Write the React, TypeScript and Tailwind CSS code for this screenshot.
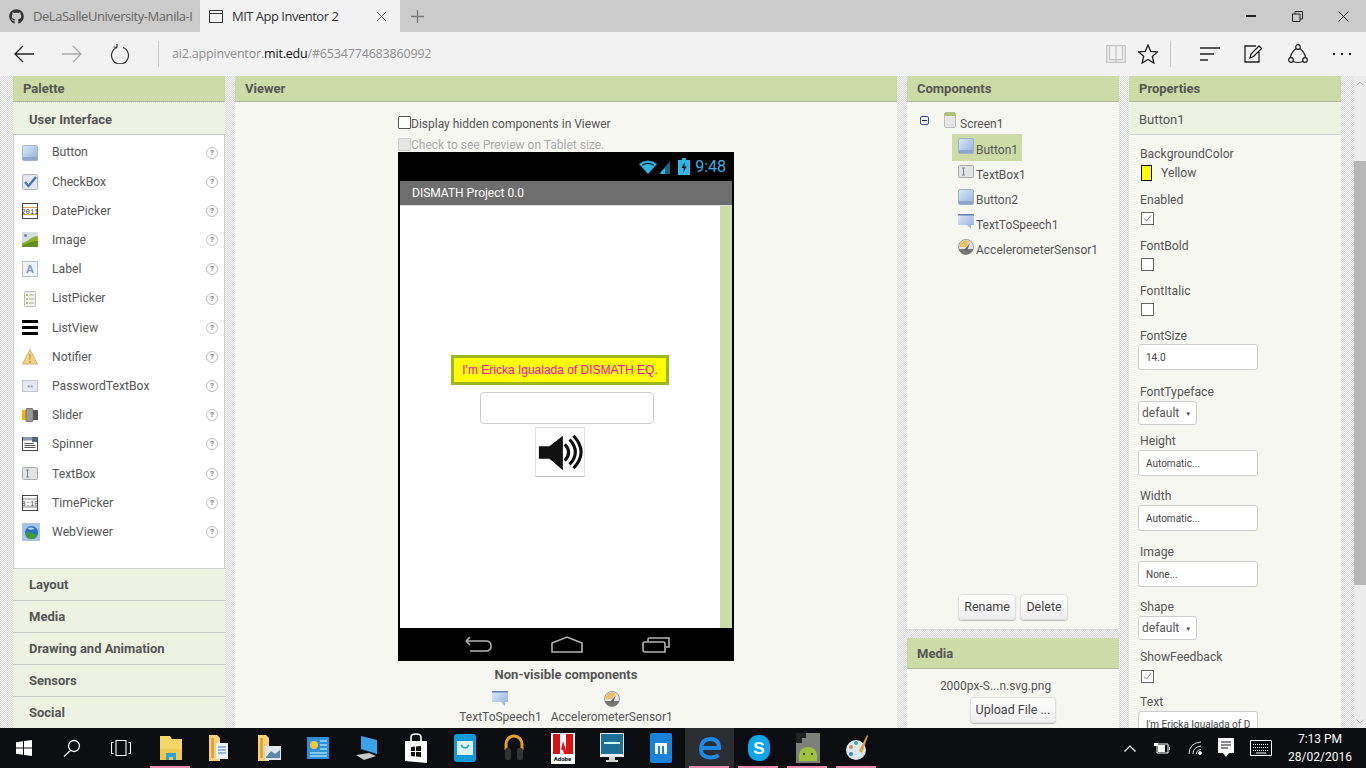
// App.tsx
import type { ReactNode } from "react";
import { FaGithub } from "react-icons/fa";

const paletteItems = [
  "Button",
  "CheckBox",
  "DatePicker",
  "Image",
  "Label",
  "ListPicker",
  "ListView",
  "Notifier",
  "PasswordTextBox",
  "Slider",
  "Spinner",
  "TextBox",
  "TimePicker",
  "WebViewer",
];

const drawers = ["Layout", "Media", "Drawing and Animation", "Sensors", "Social"];

/* ---------------- component icons ---------------- */

function Ico({ children, className = "w-4 h-4" }: { children: ReactNode; className?: string }) {
  return (
    <svg viewBox="0 0 16 16" className={["shrink-0", className].join(" ")} aria-hidden="true">
      {children}
    </svg>
  );
}

function ButtonIcon() {
  return (
    <Ico>
      <rect x="0.5" y="0.5" width="15" height="15" rx="1.5" fill="url(#blueBtn)" stroke="#9fb3cf" />
      <rect x="1" y="12" width="14" height="3" fill="#8ea6cc" />
    </Ico>
  );
}

function TextBoxIcon() {
  return (
    <Ico>
      <rect x="0.5" y="1.5" width="15" height="12" rx="1" fill="#e4e4e4" stroke="#a9a9a9" />
      <path d="M4 4h3M4 11h3M5.500 4v7" stroke="#6f7fa0" fill="none" />
    </Ico>
  );
}

function SpeechIcon() {
  return (
    <Ico>
      <path d="M0 0h16v11h-3v4l-4-4H0z" fill="url(#blueBtn)" />
      <path d="M0 0h16v1.500H0z" fill="#5f82b8" />
    </Ico>
  );
}

function SensorIcon() {
  return (
    <Ico>
      <circle cx="8" cy="8" r="7.500" fill="#e6e6e6" stroke="#9a9a9a" />
      <path d="M1.500 8a6.500 6.500 0 0 1 10-5.400L8 8z" fill="#f0c060" />
      <path d="M0.800 10h14.400A7.500 7.500 0 0 1 .8 10z" fill="#777" />
      <path d="M6 11l6-7-3 8z" fill="#666" />
    </Ico>
  );
}

function PaletteIcon({ name }: { name: string }) {
  switch (name) {
    case "Button":
      return <ButtonIcon />;
    case "CheckBox":
      return (
        <Ico>
          <rect x="0.5" y="0.5" width="15" height="15" rx="1" fill="#e3e6ec" stroke="#b0b4bc" />
          <path d="M3 8l3.500 4L14 3" fill="none" stroke="#4a74c0" strokeWidth="2.400" />
        </Ico>
      );
    case "DatePicker":
      return (
        <Ico>
          <rect x="0.5" y="0.5" width="15" height="15" fill="#fff" stroke="#444" />
          <path d="M1 4.500h14M1 11.500h14" stroke="#e0a050" />
          <text x="8" y="10.800" fontSize="7" textAnchor="middle" fontFamily="Liberation Mono, monospace" fill="#333">
            2011
          </text>
        </Ico>
      );
    case "Image":
      return (
        <Ico>
          <rect x="0" y="0" width="16" height="15" fill="#d5dde5" />
          <circle cx="3.500" cy="3.500" r="1.600" fill="#888" />
          <path d="M0 11Q6 9 8 7t8-3v11H0z" fill="#8fb02e" />
          <path d="M0 14q8-5 16-5v6H0z" fill="#5f8f1e" />
        </Ico>
      );
    case "Label":
      return (
        <Ico>
          <rect x="0.5" y="0.5" width="15" height="15" fill="#f0f3f8" stroke="#b8c0cc" />
          <text x="8" y="12" fontSize="11" fontWeight="700" textAnchor="middle" fontFamily="Liberation Sans, sans-serif" fill="#7d98c8">
            A
          </text>
        </Ico>
      );
    case "ListPicker":
      return (
        <Ico>
          <rect x="2.500" y="0.5" width="11" height="15" rx="1" fill="#f4f4ea" stroke="#bbb" />
          <path d="M4 4h2M4 8h2M4 12h2" stroke="#9ab04a" strokeWidth="1.400" />
          <path d="M7 4h5M7 8h5M7 12h5" stroke="#aaa" />
        </Ico>
      );
    case "ListView":
      return (
        <Ico>
          <path d="M0 0h16v3H0zM0 6h16v3H0zM0 12h16v3H0z" fill="#000" />
        </Ico>
      );
    case "Notifier":
      return (
        <Ico>
          <path d="M8 .5L15.500 15H.5z" fill="#f2d48a" stroke="#c9b27a" />
          <path d="M7.300 5h1.400l-.2 6h-1zM7.200 12h1.600v1.600H7.200z" fill="#d09030" />
        </Ico>
      );
    case "PasswordTextBox":
      return (
        <Ico>
          <rect x="0.5" y="2.500" width="15" height="11" fill="#e6e9f2" stroke="#c0c4cc" />
          <text x="8" y="12" fontSize="8" textAnchor="middle" fontFamily="Liberation Sans, sans-serif" fill="#6f86b8">
            **
          </text>
        </Ico>
      );
    case "Slider":
      return (
        <Ico>
          <rect x="0" y="3" width="5" height="10" fill="#f2b400" />
          <rect x="10" y="3" width="6" height="10" fill="#555" />
          <rect x="4" y="1.500" width="7" height="13" rx="1" fill="#999" stroke="#777" />
        </Ico>
      );
    case "Spinner":
      return (
        <Ico>
          <rect x="0.5" y="1.500" width="15" height="13" fill="#fff" stroke="#444" />
          <rect x="1" y="1" width="14" height="3.500" fill="#8a9ab0" />
          <rect x="10" y="1" width="5.500" height="5" fill="#567" />
          <path d="M2.500 7.500h9M2.500 9.500h11M2.500 11.500h11" stroke="#555" />
        </Ico>
      );
    case "TextBox":
      return <TextBoxIcon />;
    case "TimePicker":
      return (
        <Ico>
          <rect x="0.5" y="0.5" width="15" height="15" fill="#fff" stroke="#444" />
          <path d="M1 4h14M1 12h14" stroke="#888" />
          <text x="8" y="10.500" fontSize="7" textAnchor="middle" fontFamily="Liberation Mono, monospace" fill="#333">
            8:10
          </text>
        </Ico>
      );
    default:
      return (
        <Ico className="h-[18px] w-[18px]">
          <rect x="0" y="0" width="16" height="16" fill="#a8c4e8" />
          <circle cx="8.500" cy="8.500" r="5.800" fill="#2f6fc0" />
          <path d="M3 9q3-2 6 0t5 0q-1 5-5.500 5.300T3 9z" fill="#3f9a3a" />
          <path d="M5 5q3-2 6 0-3 2-6 0z" fill="#bcd8f2" />
        </Ico>
      );
  }
}

function HelpDot() {
  return (
    <span className="flex h-[12px] w-[12px] items-center justify-center rounded-full border border-[#bdbdbd] bg-white text-[8px] font-bold leading-none text-[#777]">
      ?
    </span>
  );
}

/* ---------------- panels ---------------- */

function PanelHeader({ title }: { title: string }) {
  return (
    <div className="flex h-[26px] shrink-0 items-center border-b border-[#b3b9a4] bg-[#cddba6] pl-[10px] text-[13px] font-bold text-[#555]">
      {title}
    </div>
  );
}

function Palette() {
  return (
    <div className="flex w-[212px] shrink-0 flex-col">
      <PanelHeader title="Palette" />
      <div className="mt-[1px] flex h-[32px] shrink-0 items-center border-b border-[#c4c4c4] bg-[#eef2e0] pl-[16px] pt-[3px] text-[13px] font-bold text-[#555]">
        User Interface
      </div>
      <div className="h-[434px] shrink-0 border-x border-b border-[#cfcfcf] bg-white pt-[3px]">
        {paletteItems.map((name) => (
          <div key={name} className="flex h-[29.2px] items-center pl-[8px] pr-[6px] text-[12.2px] text-[#555]">
            <span className="flex w-[30px] items-center">
              <PaletteIcon name={name} />
            </span>
            <span>{name}</span>
            <span className="ml-auto">
              <HelpDot />
            </span>
          </div>
        ))}
      </div>
      {drawers.map((d) => (
        <div
          key={d}
          className="flex h-[32px] shrink-0 items-center border-b border-[#c9c9c9] bg-[#eef2e0] pl-[16px] text-[13px] font-bold text-[#555]"
        >
          {d}
        </div>
      ))}
    </div>
  );
}

function SpeakerImage() {
  return (
    <svg viewBox="0 0 50 50" className="h-full w-full" aria-hidden="true">
      <path d="M3 19h11L28 8v36L14 32H3z" fill="#111" />
      <g fill="none" stroke="#111" strokeWidth="3.200">
        <path d="M30 17q8 8.500 0 17" />
        <path d="M35 12q12 13 0 26" />
        <path d="M39 8q16 17 0 34" />
      </g>
    </svg>
  );
}

function Phone() {
  return (
    <div className="flex h-[509px] w-[336px] shrink-0 flex-col bg-black px-[2px]">
      <div className="flex h-[29px] shrink-0 items-center justify-end pr-[6px]">
        <svg viewBox="0 0 32 14" className="mr-[7px] h-[14px] w-[32px]" aria-hidden="true">
          <path d="M0 4Q9-3 18 4L9 14z" fill="#33b5e5" />
          <path d="M3 5.500Q9 1 15 5.500" fill="none" stroke="#000" />
          <path d="M20 14L31 1v13z" fill="#33b5e5" opacity="0.55" />
          <path d="M22 14h4V8l-4 4z" fill="#33b5e5" />
        </svg>
        <svg viewBox="0 0 12 17" className="mr-[5px] h-[17px] w-[12px]" aria-hidden="true">
          <path d="M4 0h4v2h4v15H0V2h4z" fill="#33b5e5" />
          <path d="M7 4L3.500 10H6l-1 5 3.500-6.500H6z" fill="#000" />
        </svg>
        <span className="text-[16px] leading-none text-[#33b5e5]">9:48</span>
      </div>
      <div className="flex h-[24px] shrink-0 items-center bg-[#6e6e6e] pl-[12px] text-[12px] text-white">
        DISMATH Project 0.0
      </div>
      <div className="flex h-[423px] shrink-0 border-t border-[#ddd] bg-white">
        <div className="flex flex-1 flex-col items-center pt-[149px]">
          <div className="flex h-[30px] w-[218px] items-center justify-center border-[3px] border-[#9cb81f] bg-[#ffff00] font-['Liberation_Sans'] text-[12px] text-[#ff00c8]">
            I'm Ericka Igualada of DISMATH EQ.
          </div>
          <div className="ml-[14px] mt-[7px] h-[32px] w-[174px] rounded-[4px] border border-[#ccc] bg-white" />
          <div className="mt-[3px] h-[50px] w-[50px] border border-[#e2e2e2] border-b-[#bbb] bg-white">
            <SpeakerImage />
          </div>
        </div>
        <div className="w-[12px] bg-[#cddba6]" />
      </div>
      <div className="relative flex h-[33px] shrink-0 items-center">
        <svg viewBox="0 0 332 33" className="h-[33px] w-[332px]" fill="none" stroke="#b5b5b5" strokeWidth="1.600" aria-hidden="true">
          <path d="M66 13h20q5 0 5 5t-5 5H70M66 13l4-4M66 13l4 4" />
          <path d="M152 24v-9l15-6 15 6v9z" />
          <path d="M243 16q0-2 2-2h19q1 0 1 2v8h-20q-2 0-2-2zM248 13v-2q0-1 2-1h19v9h-3" />
        </svg>
      </div>
    </div>
  );
}

function Viewer() {
  return (
    <div className="flex w-[662px] shrink-0 flex-col">
      <PanelHeader title="Viewer" />
      <div className="flex flex-1 flex-col bg-[#f7f7f2] pl-[163px] pt-[13px]">
        <div className="flex h-[14px] shrink-0 items-center text-[12px] text-[#555]">
          <span className="h-[13px] w-[13px] shrink-0 rounded-[1px] border border-[#555] bg-white" />
          <span className="mt-[3px]">Display hidden components in Viewer</span>
        </div>
        <div className="mt-[8px] flex h-[14px] shrink-0 items-center text-[12px] text-[#aaa]">
          <span className="h-[13px] w-[13px] shrink-0 rounded-[1px] border border-[#ccc] bg-[#e6e6e6]" />
          <span className="mt-[2px]">Check to see Preview on Tablet size.</span>
        </div>
        <div className="mt-[1px] flex w-[336px] flex-col items-center">
          <Phone />
          <div className="mt-[6px] h-[16px] shrink-0 text-[13px] font-bold leading-4 text-[#555]">Non-visible components</div>
          <div className="mt-[8px] flex gap-[9px] text-[12px] leading-[15px] text-[#555]">
            <div className="flex flex-col items-center">
              <SpeechIcon />
              <span className="mt-[3px]">TextToSpeech1</span>
            </div>
            <div className="flex flex-col items-center">
              <SensorIcon />
              <span className="mt-[3px]">AccelerometerSensor1</span>
            </div>
          </div>
        </div>
      </div>
    </div>
  );
}

function TreeRow({ icon, label }: { icon: ReactNode; label: string }) {
  return (
    <div className="flex h-[25px] shrink-0 pl-[51px]">
      <div className="pt-[3px]">{icon}</div>
      <span className="ml-[2px] pt-[6px] text-[12px] leading-4">{label}</span>
    </div>
  );
}

function GrayButton({ className, children }: { className: string; children: ReactNode }) {
  return (
    <div
      className={[
        "flex items-center justify-center rounded-[4px] border border-[#dedede] bg-[linear-gradient(#ffffff,#eeeeee)] text-[12.5px] text-[#444] shadow-[0_1px_1px_rgba(0,0,0,0.25)]",
        className,
      ].join(" ")}
    >
      {children}
    </div>
  );
}

function Components() {
  return (
    <div className="flex w-[212px] shrink-0 flex-col">
      <PanelHeader title="Components" />
      <div className="flex h-[528px] shrink-0 flex-col border-b border-[#dcdcdc] bg-[#f7f7f2] pt-[9px] text-[#555]">
        <div className="flex h-[23px] shrink-0 pl-[13px]">
          <span className="mt-[5px] flex h-[9px] w-[9px] items-center justify-center rounded-[2px] border border-[#3b4a94] bg-[#eef]">
            <span className="h-px w-[5px] bg-[#223]" />
          </span>
          <svg viewBox="0 0 12 16" className="ml-[15px] mt-[1px] h-[16px] w-[12px]" aria-hidden="true">
            <rect x="0.5" y="0.5" width="11" height="15" rx="1.500" fill="#e6e6e6" stroke="#bbb" />
            <path d="M.5 4V2q0-1.500 1.500-1.500h8Q11.500.5 11.500 2v2z" fill="#a9c46c" />
          </svg>
          <span className="ml-[4px] pt-[5px] text-[12px] leading-4">Screen1</span>
        </div>
        <div className="ml-[45px] flex h-[27px] w-[70px] shrink-0 bg-[#cddba6] pl-[6px]">
          <div className="pt-[4px]">
            <ButtonIcon />
          </div>
          <span className="ml-[2px] pt-[8px] text-[12px] leading-4">Button1</span>
        </div>
        <TreeRow icon={<TextBoxIcon />} label="TextBox1" />
        <TreeRow icon={<ButtonIcon />} label="Button2" />
        <TreeRow icon={<SpeechIcon />} label="TextToSpeech1" />
        <TreeRow icon={<SensorIcon />} label="AccelerometerSensor1" />
        <div className="mb-[9px] mt-auto flex justify-center gap-[4px]">
          <GrayButton className="h-[26px] w-[58px]">Rename</GrayButton>
          <GrayButton className="h-[26px] w-[48px]">Delete</GrayButton>
        </div>
      </div>
      <div className="mt-[8px] flex h-[31px] shrink-0 items-center border-b border-[#b3b9a4] bg-[#cddba6] pl-[10px] pt-[2px] text-[13px] font-bold text-[#555]">
        Media
      </div>
      <div className="flex flex-1 flex-col items-center overflow-hidden bg-[#f7f7f2] pt-[9px]">
        <span className="mr-[35px] text-[12px] leading-4 text-[#555]">2000px-S...n.svg.png</span>
        <GrayButton className="mt-[3px] h-[26px] w-[86px] shrink-0">Upload File ...</GrayButton>
      </div>
    </div>
  );
}

function FieldLabel({ className = "", children }: { className?: string; children: ReactNode }) {
  return <div className={["h-[16px] shrink-0 pl-[11px] text-[12.2px] leading-4 text-[#555]", className].join(" ")}>{children}</div>;
}

function PropCheck({ checked = false }: { checked?: boolean }) {
  return (
    <div className="ml-[12px] mt-[4px] h-[13px] w-[13px] shrink-0 border border-[#666] bg-white">
      {checked && (
        <svg viewBox="0 0 11 11" className="h-[11px] w-[11px]" fill="none" stroke="#777" aria-hidden="true">
          <path d="M2 5.500l2.500 2.500L9 2.500" />
        </svg>
      )}
    </div>
  );
}

function PropInput({ value }: { value: string }) {
  return (
    <div className="ml-[9px] mt-[1px] flex h-[26px] w-[120px] shrink-0 items-center rounded-[3px] border border-[#ccc] bg-white px-[7px] text-[10px] text-[#444]">
      <span className="block overflow-hidden whitespace-nowrap">{value}</span>
    </div>
  );
}

function PropSelect() {
  return (
    <div className="ml-[9px] mt-[1px] flex h-[24px] w-[59px] shrink-0 items-center rounded-[3px] border border-[#ccc] bg-white pl-[3px] text-[12px] text-[#555]">
      default
      <span className="ml-[6px] text-[6px] text-[#444]">▼</span>
    </div>
  );
}

function Properties() {
  return (
    <div className="flex w-[212px] shrink-0 flex-col">
      <PanelHeader title="Properties" />
      <div className="flex h-[33px] shrink-0 items-center border-b border-[#d5d5d5] bg-[#eef2e0] pl-[10px] pt-[4px] text-[13px] text-[#555]">
        Button1
      </div>
      <div className="flex flex-1 flex-col overflow-hidden bg-[#f7f7f2] pt-[11px]">
        <FieldLabel>BackgroundColor</FieldLabel>
        <div className="ml-[12px] mt-[3px] flex h-[16px] shrink-0 items-center text-[12.2px] text-[#555]">
          <span className="h-[16px] w-[11px] border border-black bg-[#ffff00]" />
          <span className="ml-[9px]">Yellow</span>
        </div>
        <FieldLabel className="mt-[11px]">Enabled</FieldLabel>
        <PropCheck checked />
        <FieldLabel className="mt-[13px]">FontBold</FieldLabel>
        <PropCheck />
        <FieldLabel className="mt-[12px]">FontItalic</FieldLabel>
        <PropCheck />
        <FieldLabel className="mb-[-1px] mt-[12px]">FontSize</FieldLabel>
        <PropInput value="14.0" />
        <FieldLabel className="mt-[14px]">FontTypeface</FieldLabel>
        <PropSelect />
        <FieldLabel className="mt-[8px]">Height</FieldLabel>
        <PropInput value="Automatic..." />
        <FieldLabel className="mt-[12px]">Width</FieldLabel>
        <PropInput value="Automatic..." />
        <FieldLabel className="mt-[13px]">Image</FieldLabel>
        <PropInput value="None..." />
        <FieldLabel className="mt-[12px]">Shape</FieldLabel>
        <PropSelect />
        <FieldLabel className="mt-[9px] mb-[1px]">ShowFeedback</FieldLabel>
        <PropCheck checked />
        <FieldLabel className="mt-[11px]">Text</FieldLabel>
        <PropInput value="I'm Ericka Igualada of DISMATH EQ." />
      </div>
    </div>
  );
}

/* ---------------- browser chrome ---------------- */

function TabBar() {
  return (
    <div className="flex h-[32px] shrink-0 bg-[#cbcbcb] font-['Open_Sans'] text-[13px]">
      <div className="flex w-[200px] items-center overflow-hidden pl-[9px] text-[#666]">
        <FaGithub className="h-[15px] w-[15px] shrink-0 text-[#333]" />
        <span className="ml-[9px] mt-[1px] whitespace-nowrap tracking-[-0.45px]">DeLaSalleUniversity-Manila-I</span>
      </div>
      <div className="flex w-[200px] items-center bg-[#f2f2f2] pl-[9px] text-[#333]">
        <svg viewBox="0 0 14 13" className="h-[13px] w-[14px]" fill="none" stroke="#333" aria-hidden="true">
          <path d="M.5.5h13v12H.5zM.5 3.500h13" />
        </svg>
        <span className="ml-[9px] mt-[1px] whitespace-nowrap tracking-[-0.5px]">MIT App Inventor 2</span>
        <svg viewBox="0 0 12 12" className="ml-auto mr-[13px] h-[11px] w-[11px]" stroke="#555" aria-hidden="true">
          <path d="M1 1l10 10M11 1L1 11" />
        </svg>
      </div>
      <svg viewBox="0 0 13 13" className="ml-[11px] mt-[10px] h-[13px] w-[13px]" stroke="#777" strokeWidth="1.300" aria-hidden="true">
        <path d="M6.500 0v13M0 6.500h13" />
      </svg>
      <div className="ml-auto flex h-[32px] items-center pr-[17px]">
        <svg viewBox="0 0 10 2" className="h-[2px] w-[10px]" aria-hidden="true">
          <path d="M0 0h10v2H0z" fill="#222" />
        </svg>
        <svg viewBox="0 0 11 11" className="ml-[36px] h-[11px] w-[11px]" fill="none" stroke="#222" aria-hidden="true">
          <path d="M.5 3h7.500v7.500H.5zM3 3V.5h7.500V8H8" />
        </svg>
        <svg viewBox="0 0 11 11" className="ml-[35px] h-[11px] w-[11px]" stroke="#222" aria-hidden="true">
          <path d="M.5.5l10 10M10.500.5l-10 10" />
        </svg>
      </div>
    </div>
  );
}

function AddressBar() {
  return (
    <div className="flex h-[44px] shrink-0 items-center bg-[#f2f2f2] font-['Open_Sans']">
      <svg viewBox="0 0 20 18" className="ml-[14px] h-[18px] w-[20px]" fill="none" stroke="#222" strokeWidth="1.300" aria-hidden="true">
        <path d="M20 9H1M9 1L1 9l8 8" />
      </svg>
      <svg viewBox="0 0 20 18" className="ml-[28px] h-[18px] w-[20px]" fill="none" stroke="#aaa" strokeWidth="1.300" aria-hidden="true">
        <path d="M0 9h19M11 1l8 8-8 8" />
      </svg>
      <svg viewBox="0 0 20 20" className="ml-[28px] h-[20px] w-[20px]" fill="none" stroke="#333" strokeWidth="1.200" aria-hidden="true">
        <path d="M7 3.500A8.500 8.500 0 1 0 13 3.500M7 3.500V0M7 3.500L3.500 3" />
      </svg>
      <span className="ml-[28px] h-[26px] w-px bg-[#c8c8c8]" />
      <span className="ml-[13px] whitespace-nowrap text-[12.5px] tracking-[-0.18px] text-[#8f8f8f]">
        ai2.appinventor.<span className="text-[#111]">mit.edu</span>/#6534774683860992
      </span>
      <div className="ml-auto flex items-center pr-[15px]">
        <svg viewBox="0 0 20 18" className="h-[18px] w-[20px]" fill="none" stroke="#c4c4c4" strokeWidth="1.300" aria-hidden="true">
          <path d="M.7.7h18.600v16.600H.7zM10 .7v16.600M3.500.7v14H10M16.500.7v14H10" />
        </svg>
        <svg viewBox="0 0 20 20" className="ml-[12px] h-[20px] w-[20px]" fill="none" stroke="#222" strokeWidth="1.300" aria-hidden="true">
          <path d="M10 1l2.700 6.300 6.800.6-5.200 4.500 1.600 6.700L10 15.500 4.100 19l1.600-6.700L.5 7.900l6.800-.6z" />
        </svg>
        <span className="ml-[12px] h-[26px] w-px bg-[#c8c8c8]" />
        <svg viewBox="0 0 20 14" className="ml-[29px] h-[14px] w-[20px]" stroke="#222" strokeWidth="1.400" aria-hidden="true">
          <path d="M0 1h20M0 7h14M0 13h8" />
        </svg>
        <svg viewBox="0 0 18 18" className="ml-[24px] h-[18px] w-[18px]" fill="none" stroke="#222" strokeWidth="1.300" aria-hidden="true">
          <path d="M15 7v10H1V1h11M6 13l1-4 8-8 2.500 2.500-8 8z" />
        </svg>
        <svg viewBox="0 0 20 20" className="ml-[26px] h-[20px] w-[20px]" fill="none" stroke="#222" strokeWidth="1.200" aria-hidden="true">
          <circle cx="10" cy="3" r="2.300" />
          <circle cx="3" cy="16" r="2.300" />
          <circle cx="17" cy="16" r="2.300" />
          <path d="M8 4.500Q3.500 8 2.300 13.800M12 4.500Q16.500 8 17.700 13.800M5 17.500q5 2 10 0" />
        </svg>
        <span className="ml-[25px] flex gap-[6px]">
          <span className="h-[2px] w-[2px] bg-[#222]" />
          <span className="h-[2px] w-[2px] bg-[#222]" />
          <span className="h-[2px] w-[2px] bg-[#222]" />
        </span>
      </div>
    </div>
  );
}

/* ---------------- taskbar ---------------- */

function Slot({ children, bar = false, active = false }: { children: ReactNode; bar?: boolean; active?: boolean }) {
  return (
    <div className={["relative flex h-[40px] w-[49px] shrink-0 items-center justify-center", active ? "bg-[#2b2d30]" : ""].join(" ")}>
      {children}
      {bar && <span className="absolute bottom-0 left-[4px] h-[2px] w-[40px] bg-[#f08cb0]" />}
    </div>
  );
}

function DocIcon({ body }: { body: ReactNode }) {
  return (
    <svg viewBox="0 0 24 26" className="h-[26px] w-[24px]" aria-hidden="true">
      <path d="M1 0h8l3 3v23H1z" fill="#f3d27a" />
      <path d="M3 3h3v20H3z" fill="#d8a93a" />
      {body}
    </svg>
  );
}

function Taskbar() {
  return (
    <div className="flex h-[40px] shrink-0 items-center bg-[#0c0e11] text-white">
      <div className="flex h-[40px] w-[48px] items-center justify-center">
        <svg viewBox="0 0 16 16" className="h-[16px] w-[16px]" aria-hidden="true">
          <path d="M0 2.300l7-1v6.300H0zM8 1.100L16 0v7.600H8zM0 8.500h7v6.300l-7-1zM8 8.500h8V16l-8-1.100z" fill="#fff" />
        </svg>
      </div>
      <div className="flex h-[40px] w-[48px] items-center justify-center">
        <svg viewBox="0 0 18 18" className="h-[18px] w-[18px]" fill="none" stroke="#fff" strokeWidth="1.300" aria-hidden="true">
          <circle cx="11" cy="7" r="5.500" />
          <path d="M7.500 11.500L1 17.500" />
        </svg>
      </div>
      <div className="flex h-[40px] w-[50px] items-center justify-center">
        <svg viewBox="0 0 20 16" className="h-[16px] w-[20px]" fill="none" stroke="#fff" strokeWidth="1.100" aria-hidden="true">
          <path d="M5 .5h10v15H5zM2.500 2.500H.5v11h2M17.500 2.500h2v11h-2" />
        </svg>
      </div>
      <Slot bar>
        <svg viewBox="0 0 22 24" className="h-[24px] w-[22px]" aria-hidden="true">
          <path d="M0 0h10l2 3h10v21H0z" fill="#f5d565" />
          <path d="M0 13h22v11H0z" fill="#f2c94c" />
          <path d="M6 24v-7h10v7h-3v-3H9v3z" fill="#2aa3d8" />
        </svg>
      </Slot>
      <Slot>
        <DocIcon
          body={
            <>
              <rect x="8" y="8" width="12" height="16" fill="#eef2f6" />
              <path d="M10 12h8M10 15h8M10 18h8" stroke="#3a79b8" />
            </>
          }
        />
      </Slot>
      <Slot>
        <DocIcon
          body={
            <>
              <rect x="8" y="11" width="16" height="14" fill="#dfe8ee" />
              <path d="M9 22l5-6 4 3 5-4v8H9z" fill="#5c87a8" />
            </>
          }
        />
      </Slot>
      <Slot>
        <svg viewBox="0 0 22 22" className="h-[22px] w-[22px]" aria-hidden="true">
          <rect width="22" height="22" fill="#2f8fd8" />
          <circle cx="7" cy="8" r="4" fill="#f4c542" />
          <path d="M13 4h7M13 8h7M13 12h7M3 16h17M3 19h17" stroke="#dff" />
        </svg>
      </Slot>
      <Slot>
        <svg viewBox="0 0 24 26" className="h-[26px] w-[24px]" aria-hidden="true">
          <path d="M6 1l16 4v14L6 14z" fill="#3aa3e8" />
          <path d="M1 20l13-2 7 3-12 4z" fill="#c8c8c8" />
        </svg>
      </Slot>
      <Slot>
        <svg viewBox="0 0 22 30" className="h-[30px] w-[22px]" aria-hidden="true">
          <path d="M0 8h22v22L0 28z" fill="#fff" />
          <path d="M6 8V4q0-3 5-3t5 3v4" fill="none" stroke="#fff" strokeWidth="1.600" />
          <path d="M6 14l4-.5V18H6zM11 13.500l5-.5v5h-5zM6 19h4v4.500L6 23zM11 19h5v5l-5-.500z" fill="#111" />
        </svg>
      </Slot>
      <Slot>
        <svg viewBox="0 0 22 28" className="h-[28px] w-[22px]" aria-hidden="true">
          <rect width="22" height="28" rx="3" fill="#0f9bd8" />
          <rect x="3" y="7" width="16" height="14" fill="#dff3fb" />
          <path d="M7 11q4 6 8 0" fill="none" stroke="#0f9bd8" strokeWidth="1.500" />
        </svg>
      </Slot>
      <Slot>
        <svg viewBox="0 0 22 30" className="h-[30px] w-[22px]" aria-hidden="true">
          <path d="M3 17V11a8 8 0 0 1 16 0v6" fill="none" stroke="#e8a020" strokeWidth="3" />
          <rect x="2" y="15" width="6" height="12" rx="2" fill="#333" />
          <rect x="14" y="15" width="6" height="12" rx="2" fill="#333" />
        </svg>
      </Slot>
      <Slot>
        <div className="flex h-[31px] w-[24px] flex-col items-center bg-white">
          <svg viewBox="0 0 20 20" className="h-[22px] w-[20px]" aria-hidden="true">
            <path d="M0 0h7v20H0zM13 0h7v20h-7zM10 7l4 13h-3l-1-4H8z" fill="#e01010" />
          </svg>
          <span className="text-[6px] font-bold leading-[8px] text-black">Adobe</span>
        </div>
      </Slot>
      <Slot>
        <svg viewBox="0 0 24 30" className="h-[30px] w-[24px]" aria-hidden="true">
          <rect width="24" height="24" fill="#e8eef2" />
          <rect x="1" y="1" width="22" height="20" fill="#1d6f96" />
          <path d="M4 10h16" stroke="#cfe" strokeWidth="2" />
          <path d="M9 24h6v3H9zM6 27h12v2H6z" fill="#d0d0d0" />
        </svg>
      </Slot>
      <Slot>
        <svg viewBox="0 0 22 30" className="h-[30px] w-[22px]" aria-hidden="true">
          <rect width="22" height="30" rx="2" fill="#1882d8" />
          <path d="M5 10h12v11h-3v-8h-2v8h-2v-8H8v8H5z" fill="#fff" />
        </svg>
      </Slot>
      <Slot bar active>
        <svg viewBox="0 0 22 24" className="h-[24px] w-[22px]" fill="none" stroke="#1e88e5" strokeWidth="4" aria-hidden="true">
          <path d="M3 12h17q0-9-8.500-9T2 12t9.500 9.500q5 0 8-2.500" />
        </svg>
      </Slot>
      <Slot bar>
        <svg viewBox="0 0 22 26" className="h-[26px] w-[22px]" aria-hidden="true">
          <rect width="22" height="26" rx="10" fill="#0fa5e8" />
          <text x="11" y="19" fontSize="17" fontWeight="700" textAnchor="middle" fontFamily="Liberation Sans, sans-serif" fill="#fff">
            S
          </text>
        </svg>
      </Slot>
      <Slot bar>
        <svg viewBox="0 0 24 30" className="h-[30px] w-[24px]" aria-hidden="true">
          <rect width="24" height="30" fill="#7c8078" />
          <path d="M0 0h10v5H6v5H0z" fill="#222" />
          <path d="M3 28v-6a9 8 0 0 1 18 0v6z" fill="#9cc43a" />
          <circle cx="8" cy="21" r="1" fill="#222" />
          <circle cx="16" cy="21" r="1" fill="#222" />
        </svg>
      </Slot>
      <Slot bar>
        <svg viewBox="0 0 24 28" className="h-[28px] w-[24px]" aria-hidden="true">
          <ellipse cx="11" cy="16" rx="10" ry="10" fill="#dbe7ee" />
          <circle cx="6" cy="13" r="2" fill="#d84" />
          <circle cx="11" cy="9" r="2" fill="#3a9" />
          <circle cx="6" cy="20" r="2" fill="#38c" />
          <path d="M14 17L22 1l1 1-6 17z" fill="#d9a040" />
        </svg>
      </Slot>
      <div className="ml-auto flex h-[40px] items-center pr-[8px]">
        <div className="flex w-[32px] justify-center">
          <svg viewBox="0 0 12 7" className="h-[7px] w-[12px]" fill="none" stroke="#fff" strokeWidth="1.200" aria-hidden="true">
            <path d="M.5 6.500L6 1l5.500 5.500" />
          </svg>
        </div>
        <div className="flex w-[32px] justify-center">
          <svg viewBox="0 0 16 14" className="h-[14px] w-[16px]" aria-hidden="true">
            <path d="M3 3h11v9H3z" fill="none" stroke="#fff" />
            <path d="M4 4h7v7H4zM0 2h4v3H0zM15 6h1v3h-1z" fill="#fff" />
          </svg>
        </div>
        <div className="flex w-[34px] justify-center">
          <svg viewBox="0 0 14 14" className="h-[14px] w-[14px]" fill="none" stroke="#ddd" aria-hidden="true">
            <path d="M1 13Q1 2 13 1M5 13q0-7 8-8M8.500 13q0-4 4.500-4.500" />
            <circle cx="12" cy="12" r="1.500" fill="#fff" />
          </svg>
        </div>
        <div className="flex w-[28px] justify-center">
          <svg viewBox="0 0 16 20" className="h-[20px] w-[16px]" aria-hidden="true">
            <path d="M0 0h16v15h-5l-3 4-3-4H0z" fill="#fff" />
            <path d="M3 4h10M3 7h10M3 10h7" stroke="#111" />
          </svg>
        </div>
        <div className="flex w-[42px] justify-center">
          <svg viewBox="0 0 22 16" className="h-[16px] w-[22px]" fill="none" stroke="#fff" aria-hidden="true">
            <path d="M.5.5h21v15H.5z" />
            <path d="M3 4.500h16M3 7.500h16M3 10.500h16" strokeDasharray="1 1" />
            <path d="M6 13h10" />
          </svg>
        </div>
        <div className="flex w-[76px] flex-col items-center text-[12px] leading-[18px]">
          <span>7:13 PM</span>
          <span>28/02/2016</span>
        </div>
      </div>
    </div>
  );
}

export default function App() {
  return (
    <div className="flex h-[768px] w-[1366px] flex-col overflow-hidden bg-[#f2f2f2] font-['Roboto',sans-serif]">
      <svg className="absolute h-0 w-0" aria-hidden="true">
        <defs>
          <linearGradient id="blueBtn" x1="0" y1="0" x2="1" y2="1">
            <stop offset="0" stopColor="#dfe9f7" />
            <stop offset="1" stopColor="#8fb0de" />
          </linearGradient>
        </defs>
      </svg>
      <TabBar />
      <AddressBar />
      <div className="flex h-[652px] shrink-0 overflow-hidden bg-[repeating-conic-gradient(#dadada_0_25%,#f6f6f6_0_50%)] bg-size-[2px_2px] pl-[13px]">
        <div className="flex gap-[10px]">
          <Palette />
          <Viewer />
          <Components />
          <Properties />
        </div>
        <div className="ml-auto flex w-[12px] flex-col items-center bg-[#ececec]">
          <svg viewBox="0 0 8 5" className="mt-[5px] h-[5px] w-[8px] shrink-0" fill="none" stroke="#aaa" aria-hidden="true">
            <path d="M.5 4.500L4 1l3.500 3.500" />
          </svg>
          <div className="mt-[75px] h-[424px] w-full shrink-0 bg-[#b7b7b7]" />
          <svg viewBox="0 0 8 5" className="mb-[4px] mt-auto h-[5px] w-[8px] shrink-0" fill="none" stroke="#aaa" aria-hidden="true">
            <path d="M.5.5L4 4 7.500.5" />
          </svg>
        </div>
      </div>
      <Taskbar />
    </div>
  );
}
